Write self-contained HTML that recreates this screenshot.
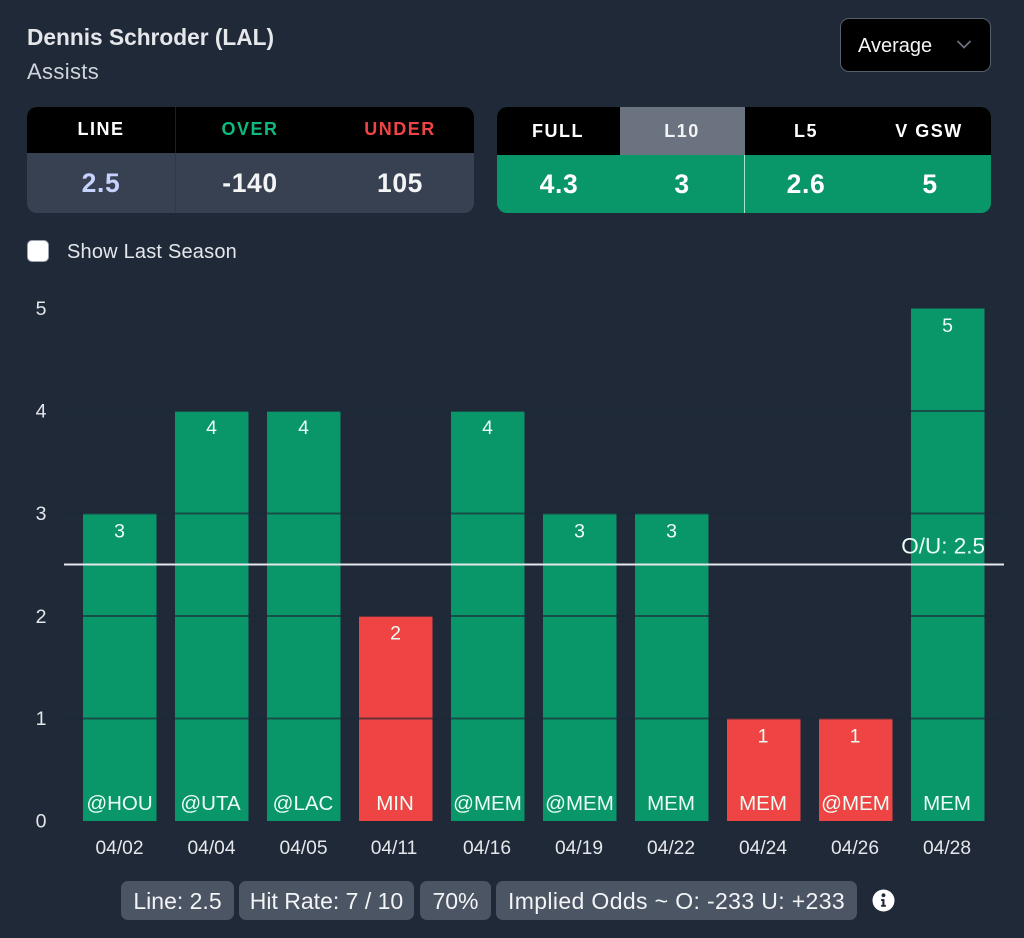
<!DOCTYPE html>
<html><head><meta charset="utf-8">
<style>
html,body{margin:0;padding:0;background:#1f2937;}
#p{position:relative;width:1024px;height:938px;overflow:hidden;background:#1f2937;font-family:"Liberation Sans",sans-serif;color:#fff;}
.a{position:absolute;white-space:nowrap;}
.c{position:absolute;white-space:nowrap;text-align:center;transform:translateX(-50%);}
.h{font-weight:700;font-size:18px;line-height:20px;letter-spacing:1.5px;}
.v{font-weight:700;font-size:26.5px;line-height:28px;letter-spacing:.6px;}
.pill{position:absolute;top:881px;height:39px;background:#4b5563;border-radius:7px;font-size:23px;line-height:40px;text-align:center;color:#f3f4f6;white-space:nowrap;}
svg text{font-family:"Liberation Sans",sans-serif;}
</style></head><body><div id="p">

<div class="a" style="left:27px;top:24px;font-weight:700;font-size:22.7px;line-height:26px;color:#e5e7eb;">Dennis Schroder (LAL)</div>
<div class="a" style="left:27px;top:59px;font-size:22px;line-height:26px;color:#d1d5db;letter-spacing:.35px;">Assists</div>

<div class="a" style="left:840px;top:18px;width:149px;height:52px;background:#000;border:1.5px solid #565e6b;border-radius:9px;"></div>
<div class="a" style="left:858px;top:34px;font-size:20px;line-height:24px;color:#f3f4f6;">Average</div>
<svg class="a" style="left:955px;top:38px" width="18" height="14" viewBox="0 0 18 14"><path d="M2.500 3L9 9.500L15.500 3" fill="none" stroke="#6b7280" stroke-width="1.800"/></svg>

<!-- left table -->
<div class="a" style="left:27px;top:107px;width:447px;height:106px;border-radius:10px;overflow:hidden;background:#374151;">
  <div class="a" style="left:0;top:0;width:447px;height:46px;background:#000;"></div>
  <div class="a" style="left:148px;top:0;width:1px;height:46px;background:#1c1f24;"></div>
  <div class="a" style="left:148px;top:46px;width:1px;height:60px;background:#2e3846;"></div>
</div>
<div class="c h" style="left:101px;top:119px;">LINE</div>
<div class="c h" style="left:250px;top:119px;color:#10b981;">OVER</div>
<div class="c h" style="left:400px;top:119px;color:#ef4444;">UNDER</div>
<div class="c v" style="left:101px;top:169px;color:#c7d2fe;">2.5</div>
<div class="c v" style="left:250px;top:169px;color:#f3f4f6;">-140</div>
<div class="c v" style="left:400px;top:169px;color:#f3f4f6;">105</div>

<!-- right table -->
<div class="a" style="left:497px;top:107px;width:494px;height:106px;border-radius:10px;overflow:hidden;background:#099669;">
  <div class="a" style="left:0;top:0;width:494px;height:48px;background:#000;"></div>
  <div class="a" style="left:123px;top:0;width:125px;height:48px;background:#6b7280;"></div>
  <div class="a" style="left:247px;top:48px;width:1px;height:58px;background:#a7e3cd;"></div>
</div>
<div class="c h" style="left:558px;top:121px;">FULL</div>
<div class="c h" style="left:682px;top:121px;color:#f3f4f6;">L10</div>
<div class="c h" style="left:806px;top:121px;">L5</div>
<div class="c h" style="left:929px;top:121px;">V GSW</div>
<div class="c v" style="left:559px;top:170px;">4.3</div>
<div class="c v" style="left:682px;top:170px;">3</div>
<div class="c v" style="left:806px;top:170px;">2.6</div>
<div class="c v" style="left:930px;top:170px;">5</div>

<!-- checkbox -->
<div class="a" style="left:27px;top:240px;width:20px;height:20px;background:#fff;border:1.5px solid #9ca3af;border-radius:5px;"></div>
<div class="a" style="left:67px;top:240px;font-size:20px;line-height:24px;color:#e5e7eb;letter-spacing:.2px;">Show Last Season</div>

<!-- chart -->
<svg class="a" style="left:0;top:0" width="1024" height="938" viewBox="0 0 1024 938">
  <g fill="#099669">
    <rect x="83" y="513.500" width="73.500" height="307.500"/>
    <rect x="175" y="411" width="73.500" height="410"/>
    <rect x="267" y="411" width="73.500" height="410"/>
    <rect x="451" y="411" width="73.500" height="410"/>
    <rect x="543" y="513.500" width="73.500" height="307.500"/>
    <rect x="635" y="513.500" width="73.500" height="307.500"/>
    <rect x="911" y="308.500" width="73.500" height="512.500"/>
  </g>
  <g fill="#ef4444">
    <rect x="359" y="616" width="73.500" height="205"/>
    <rect x="727" y="718.500" width="73.500" height="102.500"/>
    <rect x="819" y="718.500" width="73.500" height="102.500"/>
  </g>
  <g stroke="#1f2937" stroke-opacity=".65" stroke-width="2">
    <line x1="64" x2="1004" y1="718.500" y2="718.500"/>
    <line x1="64" x2="1004" y1="616" y2="616"/>
    <line x1="64" x2="1004" y1="513.500" y2="513.500"/>
    <line x1="64" x2="1004" y1="411" y2="411"/>
  </g>
  <line x1="64" x2="1004" y1="564.500" y2="564.500" stroke="#e5e7eb" stroke-width="2"/>

  <g fill="#e5e7eb" font-size="19.500" text-anchor="middle">
    <text x="41" y="827.500">0</text>
    <text x="41" y="725">1</text>
    <text x="41" y="623">2</text>
    <text x="41" y="520">3</text>
    <text x="41" y="417.500">4</text>
    <text x="41" y="315">5</text>
  </g>
  <g fill="#e5e7eb" font-size="19.200" text-anchor="middle">
    <text x="119.500" y="854">04/02</text>
    <text x="211.500" y="854">04/04</text>
    <text x="303.500" y="854">04/05</text>
    <text x="394" y="854">04/11</text>
    <text x="487" y="854">04/16</text>
    <text x="579" y="854">04/19</text>
    <text x="671" y="854">04/22</text>
    <text x="763" y="854">04/24</text>
    <text x="855" y="854">04/26</text>
    <text x="947" y="854">04/28</text>
  </g>
  <g fill="#ecfdf5" font-size="19.500" text-anchor="middle">
    <text x="119.500" y="537.500">3</text>
    <text x="211.500" y="434">4</text>
    <text x="303.500" y="434">4</text>
    <text x="395.500" y="639.500">2</text>
    <text x="487.500" y="434">4</text>
    <text x="579.500" y="537.500">3</text>
    <text x="671.500" y="537.500">3</text>
    <text x="763" y="742.500">1</text>
    <text x="855" y="742.500">1</text>
    <text x="947.500" y="332">5</text>
  </g>
  <g fill="#ecfdf5" font-size="20.500" text-anchor="middle">
    <text x="119.500" y="810">@HOU</text>
    <text x="210.500" y="810">@UTA</text>
    <text x="303" y="810">@LAC</text>
    <text x="395" y="810">MIN</text>
    <text x="487.500" y="810">@MEM</text>
    <text x="579.500" y="810">@MEM</text>
    <text x="671" y="810">MEM</text>
    <text x="763" y="810">MEM</text>
    <text x="855.500" y="810">@MEM</text>
    <text x="947" y="810">MEM</text>
  </g>
  <text x="985" y="553.500" text-anchor="end" font-size="22.500" fill="#ecfdf5">O/U: 2.5</text>
</svg>

<!-- pills -->
<div class="pill" style="left:121px;width:113px;">Line: 2.5</div>
<div class="pill" style="left:239px;width:175px;">Hit Rate: 7 / 10</div>
<div class="pill" style="left:420px;width:71px;">70%</div>
<div class="pill" style="left:496px;width:361px;letter-spacing:.37px;">Implied Odds ~ O: -233 U: +233</div>
<svg class="a" style="left:872px;top:889px" width="23" height="23" viewBox="0 0 24 24">
  <circle cx="12" cy="12" r="11.500" fill="#fff"/>
  <circle cx="12" cy="6.500" r="2" fill="#1f2937"/>
  <path d="M9.500 10.500H13V16.500H14.500V18.500H9.500V16.500H10.800V12.500H9.500Z" fill="#1f2937"/>
</svg>

</div></body></html>
